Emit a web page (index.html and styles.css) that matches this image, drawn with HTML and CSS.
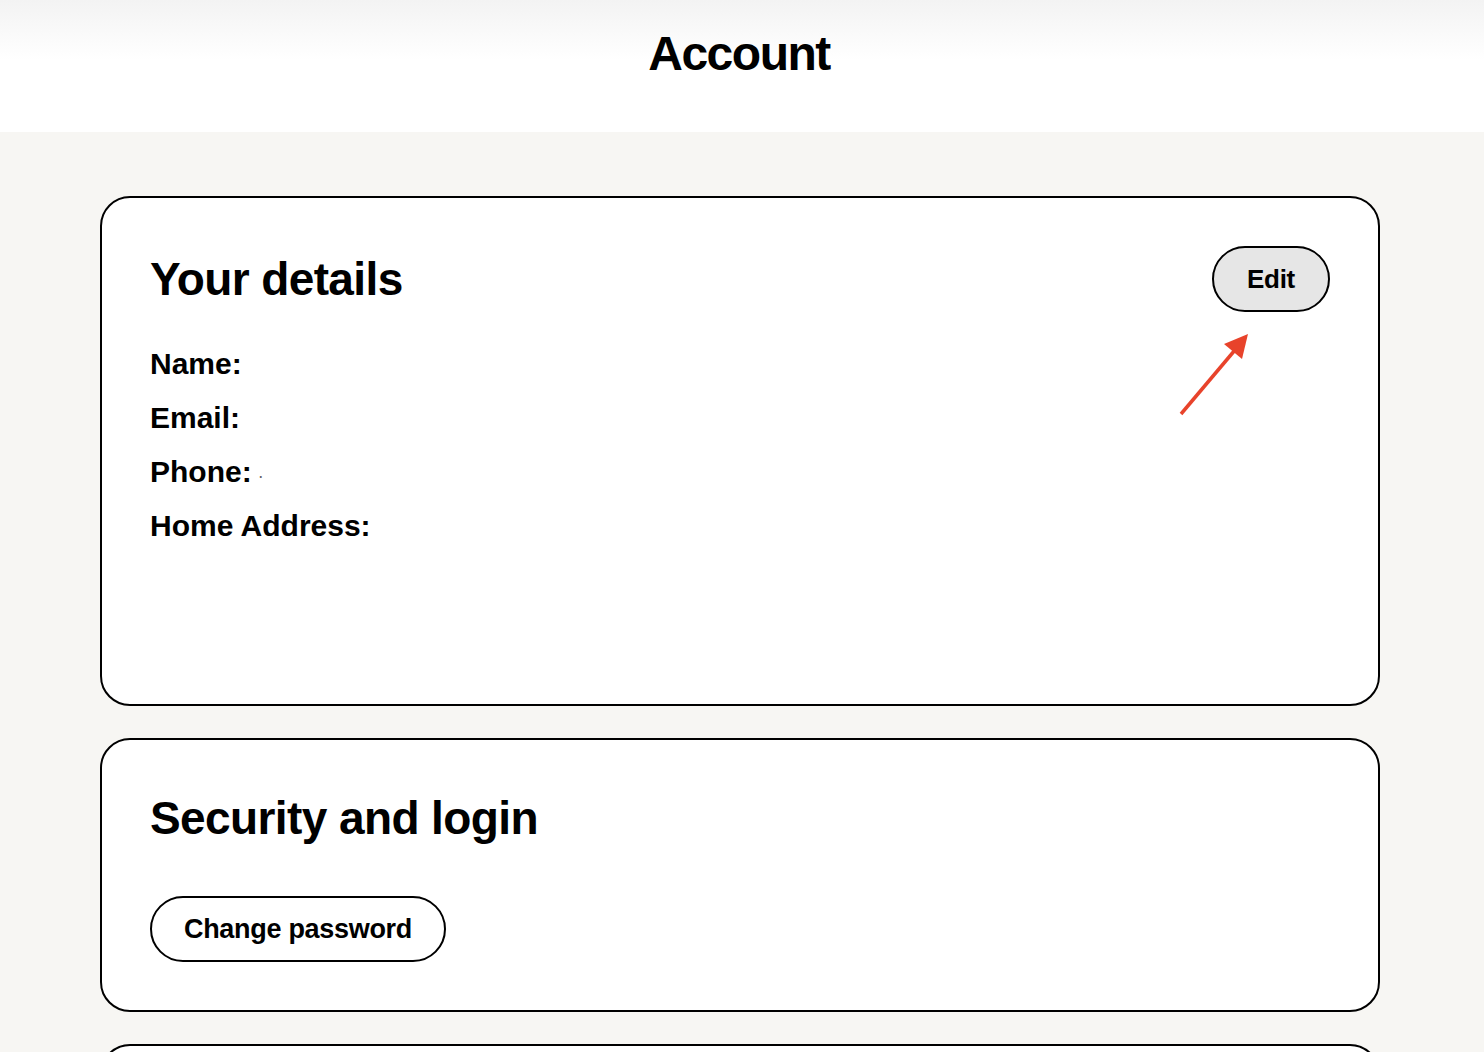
FILE: index.html
```html
<!DOCTYPE html>
<html lang="en">
<head>
<meta charset="utf-8">
<title>Account</title>
<link rel="stylesheet" href="styles.css">
</head>
<body>
<header class="top">
  <h1 class="top-title">Account</h1>
</header>
<main class="content">
  <section class="card card-details">
    <div class="card-head">
      <h2 class="card-title">Your details</h2>
      <button class="btn btn-edit" type="button">Edit</button>
    </div>
    <dl class="details">
      <div class="row"><dt>Name:</dt><dd></dd></div>
      <div class="row"><dt>Email:</dt><dd></dd></div>
      <div class="row"><dt>Phone:</dt><dd class="dot">·</dd></div>
      <div class="row"><dt>Home Address:</dt><dd></dd></div>
    </dl>
    <svg class="annot" width="90" height="100" viewBox="0 0 90 100" aria-hidden="true">
      <line x1="8" y1="91" x2="62" y2="27" stroke="#e8432b" stroke-width="3.5" stroke-linecap="butt"/>
      <polygon points="75,11 69,36 51,21" fill="#e8432b"/>
    </svg>
  </section>
  <section class="card card-security">
    <h2 class="card-title">Security and login</h2>
    <button class="btn btn-outline" type="button">Change password</button>
  </section>
  <section class="card card-more"></section>
</main>
</body>
</html>
```

FILE: styles.css
```css
* { box-sizing: border-box; }
html, body { margin: 0; padding: 0; }
body {
  background: #f7f6f3;
  font-family: "Liberation Sans", Arial, Helvetica, sans-serif;
  color: #000;
  height: 1052px;
  overflow: hidden;
}
.top {
  height: 132px;
  background: linear-gradient(#f3f3f3 0px, #ffffff 60px, #ffffff 132px);
  display: flex;
  justify-content: center;
  padding-top: 30px;
  padding-right: 6px;
}
.top-title {
  margin: 0;
  font-size: 48px;
  line-height: 48px;
  font-weight: 700;
  letter-spacing: -1.5px;
}
.content {
  padding: 64px 104px 0 100px;
  display: flex;
  flex-direction: column;
  gap: 32px;
}
.card {
  position: relative;
  background: #fff;
  border: 2px solid #000;
  border-radius: 30px;
  padding: 48px;
}
.card-head {
  display: flex;
  align-items: center;
  justify-content: space-between;
}
.card-title {
  margin: 0;
  font-size: 46px;
  line-height: 60px;
  font-weight: 700;
  letter-spacing: -0.6px;
}
.btn {
  font-family: "Liberation Sans", Arial, Helvetica, sans-serif;
  font-weight: 700;
  font-size: 26px;
  letter-spacing: -0.3px;
  height: 66px;
  border: 2px solid #000;
  border-radius: 33px;
  color: #000;
  padding: 0;
}
.btn-edit {
  background: #e6e6e6;
  width: 118px;
}
.btn-outline {
  background: #fff;
  margin-top: 48px;
  width: 296px;
  font-size: 27px;
}
.details {
  margin: 25px 0 0 0;
  padding-bottom: 103px;
}
.row {
  display: flex;
  align-items: baseline;
  height: 54px;
  line-height: 54px;
}
.row dt {
  font-size: 30px;
  font-weight: 700;
  letter-spacing: 0;
}
.row dd {
  margin: 0 0 0 6px;
}
.dot {
  font-size: 18px;
  color: #666;
}
.annot {
  position: absolute;
  left: 1071px;
  top: 125px;
}
.card-more {
  height: 60px;
}
```
